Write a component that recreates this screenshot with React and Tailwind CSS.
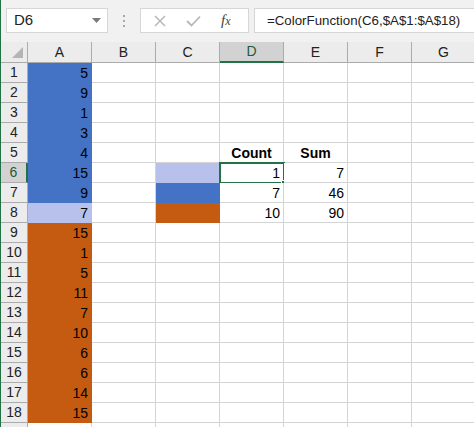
import React from "react";

const BLUE = "bg-[#4472c4]";
const LIGHT = "bg-[#b7c1ec]";
const ORANGE = "bg-[#c55a11]";

const colA = [5, 9, 1, 3, 4, 15, 9, 7, 15, 1, 5, 11, 7, 10, 6, 6, 14, 15];
const cols = ["A", "B", "C", "D", "E", "F", "G"];

function fillA(r) {
  if (r <= 7) return BLUE;
  if (r === 8) return LIGHT;
  return ORANGE;
}

// contents of the small summary table in C5:E8
const table = {
  "C6": { fill: LIGHT },
  "C7": { fill: BLUE },
  "C8": { fill: ORANGE },
  "D5": { text: "Count", bold: true, center: true },
  "E5": { text: "Sum", bold: true, center: true },
  "D6": { text: "1" },
  "E6": { text: "7" },
  "D7": { text: "7" },
  "E7": { text: "46" },
  "D8": { text: "10" },
  "E8": { text: "90" },
};

function Cell({ col, row }) {
  let fill = null;
  let text = "";
  let bold = false;
  let center = false;
  if (col === "A" && row <= 18) {
    fill = fillA(row);
    text = String(colA[row - 1]);
  }
  const t = table[col + row];
  if (t) {
    fill = t.fill || fill;
    text = t.text || text;
    bold = !!t.bold;
    center = !!t.center;
  }
  const selected = col === "D" && row === 6;
  return (
    <div
      className={`relative h-5 border-r border-b flex items-center px-[3px] text-[14px] leading-none text-black ${
        fill ? fill + " border-transparent" : "bg-white border-[#d4d4d4]"
      } ${center ? "justify-center" : "justify-end"} ${bold ? "font-bold" : ""}`}
    >
      {text}
      {selected && (
        <div className="absolute -left-[1px] -top-[1px] w-[66px] h-[22px] border-2 border-[#217346]">
          <div className="absolute -right-[4px] -bottom-[4px] w-[6px] h-[6px] bg-[#217346] border border-white" />
        </div>
      )}
    </div>
  );
}

export default function App() {
  const rows = Array.from({ length: 19 }, (_, i) => i + 1);
  return (
    <div
      className="w-[474px] h-[427px] overflow-hidden bg-white border-l border-[#217346]"
      style={{ fontFamily: '"Liberation Sans", Arial, sans-serif' }}
    >
      {/* formula bar */}
      <div className="h-[42px] bg-[#f1f1f1] flex items-start pt-[8px] pl-[5px] gap-0">
        <div className="w-[102px] h-[25px] bg-white border border-[#d6d6d6] flex items-center justify-between pl-[7px] pr-[6px]">
          <span className="text-[15px] text-[#222]">D6</span>
          <svg width="9" height="5" viewBox="0 0 9 5">
            <path d="M0 0 L9 0 L4.5 5 Z" fill="#7a7a7a" />
          </svg>
        </div>
        <div className="w-[32px] h-[25px] flex flex-col items-center justify-center gap-[3px]">
          <span className="w-[2px] h-[2px] bg-[#a8a8a8]" />
          <span className="w-[2px] h-[2px] bg-[#a8a8a8]" />
          <span className="w-[2px] h-[2px] bg-[#a8a8a8]" />
        </div>
        <div className="w-[109px] h-[25px] bg-white border border-[#d6d6d6] flex items-center pl-[13px]">
          <svg width="12" height="12" viewBox="0 0 12 12" className="mr-[20px]">
            <path d="M1 1 L11 11 M11 1 L1 11" stroke="#b8b8b8" strokeWidth="1.5" />
          </svg>
          <svg width="15" height="12" viewBox="0 0 15 12" className="mr-[20px]">
            <path d="M1 6 L5.5 10.5 L14 1.5" stroke="#b8b8b8" strokeWidth="1.8" fill="none" />
          </svg>
          <span
            className="text-[15px] italic text-[#444]"
            style={{ fontFamily: '"Liberation Serif", "Times New Roman", serif' }}
          >
            f<span className="text-[12px]">x</span>
          </span>
        </div>
        <div className="flex-1 h-[25px] ml-[5px] bg-white border border-r-0 border-[#d6d6d6] flex items-center pl-[12px]">
          <span className="text-[13.3px] text-[#222]">=ColorFunction(C6,$A$1:$A$18)</span>
        </div>
      </div>

      {/* sheet grid */}
      <div className="grid grid-cols-[27px_repeat(7,64px)]">
        <div className="relative h-[21px] bg-[#ececec] border-r border-b border-[#ababab]">
          <svg width="11" height="11" viewBox="0 0 11 11" className="absolute right-[4px] bottom-[4px]">
            <path d="M11 0 L11 11 L0 11 Z" fill="#b4b4b4" />
          </svg>
        </div>
        {cols.map((c) =>
          c === "D" ? (
            <div
              key={c}
              className="h-[21px] bg-[#d2d2d2] border-r border-[#ababab] border-b-2 border-b-[#217346] flex items-center justify-center text-[14px] text-[#1f5a3a]"
            >
              {c}
            </div>
          ) : (
            <div
              key={c}
              className="h-[21px] bg-[#ececec] border-r border-b border-[#ababab] flex items-center justify-center text-[14px] text-[#222]"
            >
              {c}
            </div>
          )
        )}
        {rows.map((r) => (
          <React.Fragment key={r}>
            {r === 6 ? (
              <div className="h-5 bg-[#d2d2d2] border-r-2 border-r-[#217346] border-b border-b-[#ababab] flex items-center justify-center text-[14px] text-[#1f5a3a]">
                {r}
              </div>
            ) : (
              <div className="h-5 bg-[#ececec] border-r border-b border-[#ababab] flex items-center justify-center text-[14px] text-[#222]">
                {r <= 18 ? r : ""}
              </div>
            )}
            {cols.map((c) => (
              <Cell key={c} col={c} row={r} />
            ))}
          </React.Fragment>
        ))}
      </div>
    </div>
  );
}
